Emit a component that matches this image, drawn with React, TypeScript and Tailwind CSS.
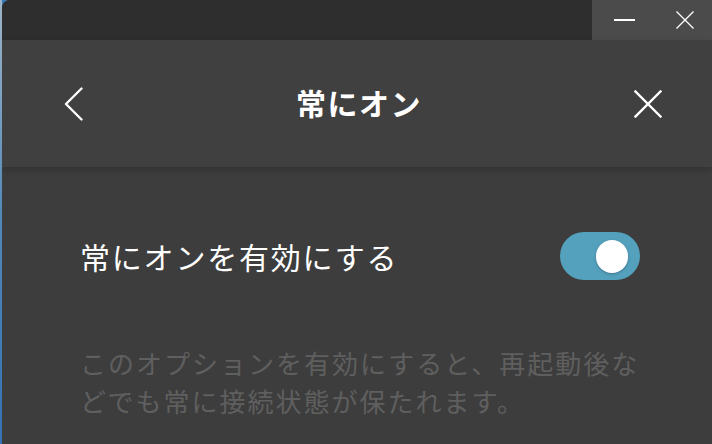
const jp = '"Noto Sans CJK JP", "Noto Sans", sans-serif';

function ChevronLeft() {
  return (
    <svg width="20" height="34" viewBox="0 0 20 34" fill="none">
      <path d="M17.5 1.5 L2 17 L17.5 32.5" stroke="white" strokeWidth="2.4" strokeLinecap="round" strokeLinejoin="round" />
    </svg>
  );
}

function CloseIcon({ size, stroke }: { size: number; stroke: number }) {
  return (
    <svg width={size} height={size} viewBox="0 0 28 28" fill="none">
      <path d="M1.5 1.5 L26.5 26.5 M26.5 1.5 L1.5 26.5" stroke="white" strokeWidth={stroke} strokeLinecap="square" />
    </svg>
  );
}

function Toggle({ on }: { on: boolean }) {
  return (
    <div
      className={`w-[80px] h-[48px] rounded-full flex items-center px-[12px] ${
        on ? 'bg-[#54a1bd] justify-end' : 'bg-[#5a5a5a] justify-start'
      }`}
    >
      <div className="w-[32px] h-[33px] rounded-full bg-white shadow-[0_1px_3px_rgba(0,0,0,0.25)]" />
    </div>
  );
}

export default function App() {
  return (
    <div className="w-[712px] h-[444px] flex overflow-hidden bg-[#3b7cbd]" style={{ fontFamily: jp }}>
      {/* desktop peeking through on the left */}
      <div className="w-[2px] h-full bg-gradient-to-b from-[#9fb4c6] via-[#4f88b8] to-[#3571b4]" />

      <div className="flex-1 flex flex-col rounded-tl-[8px] overflow-hidden bg-[#3d3d3d]">
        {/* title bar */}
        <div className="h-[40px] shrink-0 bg-[#2e2e2e] flex justify-end">
          <div className="w-[120px] h-full bg-[#4b4b4b] flex">
            <div className="w-[60px] h-full flex items-center justify-center pl-[4px]">
              <div className="w-[21px] h-[2px] bg-white" />
            </div>
            <div className="w-[60px] h-full flex items-center justify-center pl-[6px] pb-[1px]">
              <CloseIcon size={18} stroke={2} />
            </div>
          </div>
        </div>

        {/* header */}
        <div className="relative z-10 h-[127px] shrink-0 bg-[#404040] shadow-[0_3px_6px_rgba(0,0,0,0.18)] grid grid-cols-[1fr_auto_1fr] items-center pl-[62px] pr-[50px]">
          <div className="flex items-center">
            <ChevronLeft />
          </div>
          <h1 className="text-[30px] font-bold text-white tracking-[1.5px] leading-none pr-[8px] pb-[3px]">常にオン</h1>
          <div className="flex justify-end">
            <CloseIcon size={28} stroke={2.4} />
          </div>
        </div>

        {/* body */}
        <div className="flex-1 pl-[78px] pr-[72px] pt-[65px]">
          <div className="flex items-center justify-between h-[48px]">
            <span className="text-[30px] text-white tracking-[1.8px] leading-none">常にオンを有効にする</span>
            <Toggle on />
          </div>
          <p className="mt-[64px] text-[26px] leading-[38px] tracking-[2px] text-[#5f5f5f]">
            このオプションを有効にすると、再起動後な
            <br />
            どでも常に接続状態が保たれます。
          </p>
        </div>
      </div>
    </div>
  );
}
